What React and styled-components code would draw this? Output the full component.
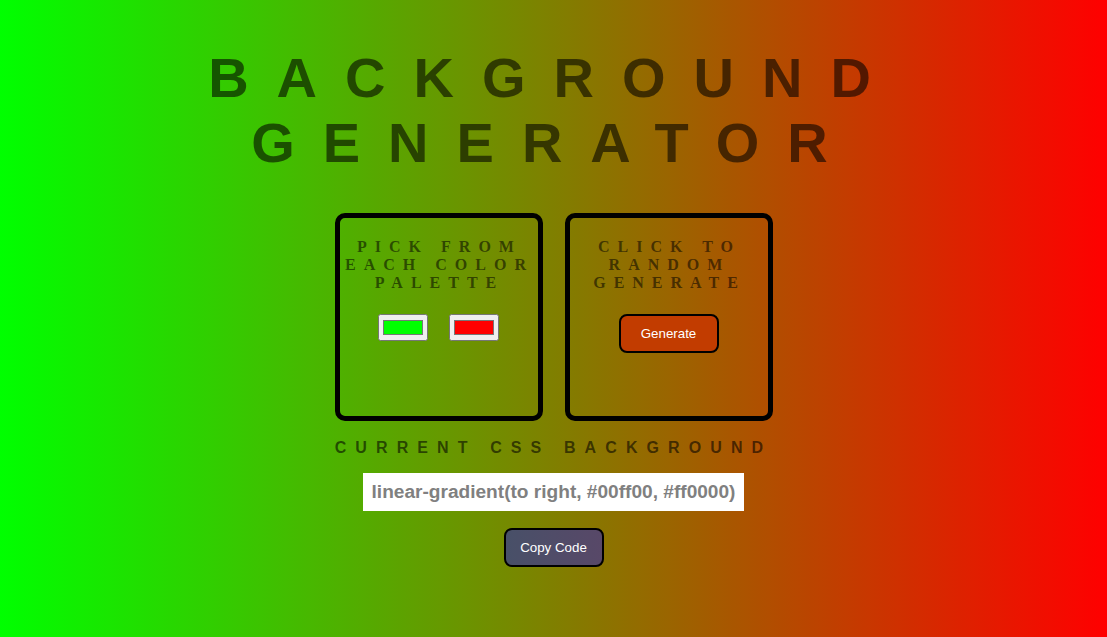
import React, { useState } from "react";
import styled, { createGlobalStyle } from "styled-components";

const GlobalStyle = createGlobalStyle`
  html, body { margin: 0; padding: 0; }
  body {
    min-height: 100vh;
    background: linear-gradient(to right, #00ff00, #ff0000);
    font-family: "Liberation Sans", Arial, sans-serif;
  }
`;

const Page = styled.main`
  min-height: 100vh;
  display: flex;
  flex-direction: column;
  align-items: center;
`;

const Title = styled.h1`
  width: 760px;
  margin: 45px 0 38px;
  font-family: "Liberation Sans", Arial, sans-serif;
  font-size: 56px;
  font-weight: bold;
  line-height: normal;
  letter-spacing: 28px;
  text-align: center;
  color: rgba(0, 0, 0, 0.58);
`;

const Row = styled.section`
  display: flex;
  gap: 22px;
`;

const Card = styled.div`
  width: 198px;
  height: 178px;
  border: 5px solid #000;
  border-radius: 10px;
  display: flex;
  flex-direction: column;
  align-items: center;
  padding-top: 20px;
  box-sizing: content-box;
`;

const CardTitle = styled.h3`
  margin: 0 0 22px;
  font-family: "Liberation Serif", "Times New Roman", serif;
  font-size: 16px;
  font-weight: bold;
  line-height: normal;
  letter-spacing: 8px;
  text-align: center;
  color: rgba(0, 0, 0, 0.55);
  padding-left: 2px;
`;

const Pickers = styled.div`
  display: flex;
  gap: 21px;
`;

const ColorInput = styled.input`
  width: 50px;
  height: 27px;
  margin: 0;
`;

const Button = styled.button`
  width: 100px;
  margin: 0;
  padding: 10px 0;
  border: 2px solid #000;
  border-radius: 8px;
  font-family: "Liberation Sans", Arial, sans-serif;
  font-size: 13.333px;
  line-height: normal;
  color: #fff;
  background: ${(p) => p.$bg};
  cursor: pointer;
`;

const Label = styled.h2`
  margin: 18px 0 16px;
  font-family: "Liberation Sans", Arial, sans-serif;
  font-size: 16px;
  font-weight: bold;
  line-height: normal;
  letter-spacing: 9.1px;
  color: rgba(0, 0, 0, 0.58);
`;

const CodeBox = styled.div`
  background: #fff;
  padding: 8px 9px;
  font-family: "Liberation Sans", Arial, sans-serif;
  font-size: 19.1px;
  font-weight: bold;
  line-height: normal;
  color: #808080;
  margin-bottom: 17px;
`;

export default function App() {
  const [c1, setC1] = useState("#00ff00");
  const [c2, setC2] = useState("#ff0000");
  return (
    <>
      <GlobalStyle />
      <Page>
        <Title>BACKGROUND GENERATOR</Title>
        <Row>
          <Card>
            <CardTitle>PICK FROM EACH COLOR PALETTE</CardTitle>
            <Pickers>
              <ColorInput type="color" value={c1} onChange={(e) => setC1(e.target.value)} />
              <ColorInput type="color" value={c2} onChange={(e) => setC2(e.target.value)} />
            </Pickers>
          </Card>
          <Card>
            <CardTitle>CLICK TO RANDOM GENERATE</CardTitle>
            <Button $bg="#c23c00">Generate</Button>
          </Card>
        </Row>
        <Label>CURRENT CSS BACKGROUND</Label>
        <CodeBox>linear-gradient(to right, {c1}, {c2})</CodeBox>
        <Button $bg="linear-gradient(to right, #485068, #584868)">Copy Code</Button>
      </Page>
    </>
  );
}
